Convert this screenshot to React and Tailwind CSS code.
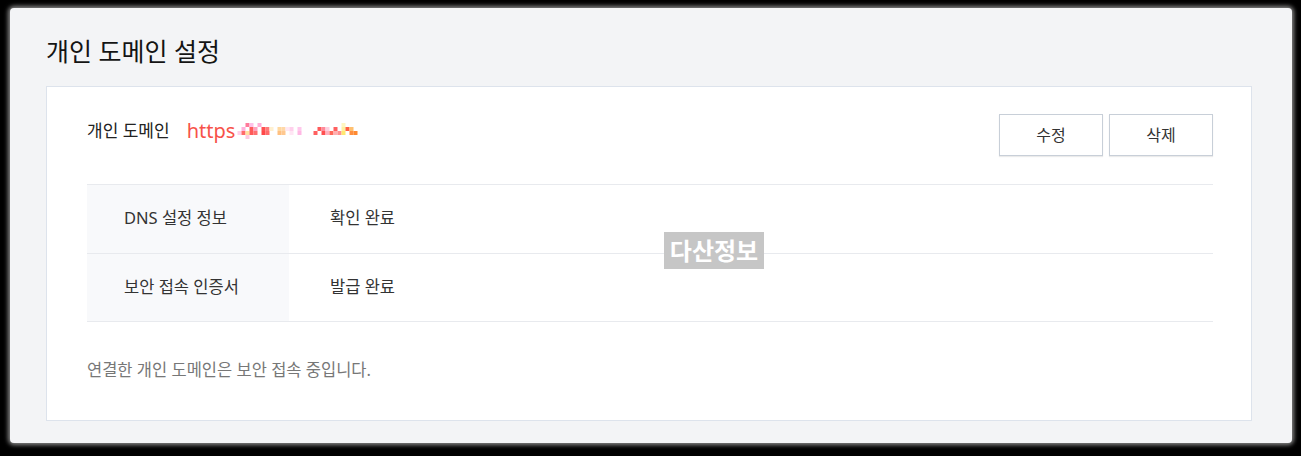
import React from "react";

// blurred-out domain (mosaic blocks), col/row in 4px cells
const mosaic = [
  [0, 2, "#ffd0ea"], [1, 1, "#ffb3dd"], [1, 2, "#ff6a6a"], [2, 0, "#ff7a9a"], [2, 2, "#ffe0a0"],
  [2, 3, "#ffc8e0"], [3, 1, "#ff5a5a"], [3, 2, "#ff5a5a"], [3, 0, "#ffc0e8"], [4, 1, "#ffa0c0"],
  [4, 2, "#ff7070"], [5, 0, "#ffb0d8"], [6, 1, "#ff5050"], [6, 2, "#ff4848"], [7, 1, "#ff7a7a"],
  [7, 2, "#ff6a6a"], [8, 1, "#fff0d0"], [10, 1, "#ffd8a0"], [10, 2, "#ffc080"], [11, 1, "#ffd8a8"],
  [11, 2, "#ffc890"], [12, 1, "#ffe8f4"], [13, 1, "#ffd0ec"], [13, 2, "#ffe6f4"], [15, 1, "#ffc8ec"],
  [15, 2, "#ffb8e4"], [19, 2, "#ff6060"], [20, 1, "#ff5a5a"], [21, 1, "#ff8a9a"], [21, 2, "#ff5050"],
  [22, 1, "#ffd0e0"], [22, 2, "#ffb0c0"], [23, 2, "#ff6a5a"], [24, 1, "#ff6060"], [24, 2, "#ffb0b0"],
  [25, 2, "#ff9090"], [26, 0, "#fff6c0"], [26, 1, "#fff0a0"], [26, 2, "#ffe870"], [27, 1, "#ff6040"],
  [28, 1, "#ffc070"], [28, 2, "#ff9040"], [29, 2, "#ff8a30"],
];

function Mosaic() {
  return (
    <svg width="125" height="16" viewBox="0 0 120 16" className="block">
      {mosaic.map(([c, r, fill], i) => (
        <rect key={i} x={c * 4} y={r * 4} width="4" height="4" fill={fill} />
      ))}
    </svg>
  );
}

const rows = [
  { label: "DNS 설정 정보", value: "확인 완료" },
  { label: "보안 접속 인증서", value: "발급 완료" },
];

export default function App() {
  return (
    <div
      className="h-[456px] w-full bg-black pt-[8px] pl-[10px] pr-[9px] pb-[13px]"
      style={{ fontFamily: '"Noto Sans", "Noto Sans CJK KR", sans-serif' }}
    >
      <div className="h-full rounded-sm bg-[#f3f4f6] shadow-[0_0_4px_2px_rgba(170,170,170,0.8)] pl-[36px] pr-[40px] pt-[27px]">
        <h1 className="text-[25px] leading-[32px] text-[#141414] font-normal">개인 도메인 설정</h1>

        <div className="relative mt-[19px] border border-[#dde3ec] bg-white pl-[40px] pr-[38px] pt-[27px] pb-[38px]">
          <div className="flex items-start justify-between">
            <div className="flex items-center pt-[5px]">
              <span className="text-[17px] leading-[24px] text-[#222]">개인 도메인</span>
              <span className="ml-[17px] text-[20px] leading-[24px] text-[#f7524a]">https</span>
              <Mosaic />
            </div>
            <div className="flex gap-[6px]">
              <button className="h-[42px] w-[104px] border border-[#c8cfd8] bg-white text-[16px] text-[#333] shadow-[0_1px_1px_rgba(0,0,0,0.08)]">
                수정
              </button>
              <button className="h-[42px] w-[104px] border border-[#c8cfd8] bg-white text-[16px] text-[#333] shadow-[0_1px_1px_rgba(0,0,0,0.08)]">
                삭제
              </button>
            </div>
          </div>

          <div className="mt-[28px] border-t border-[#e8eaee]">
            {rows.map((row) => (
              <div key={row.label} className="flex h-[68.5px] border-b border-[#e8eaee] text-[16.5px] text-[#333]">
                <div className="flex w-[202px] items-center bg-[#f8f9fb] pl-[37px]">{row.label}</div>
                <div className="flex items-center pl-[41px]">{row.value}</div>
              </div>
            ))}
          </div>

          <p className="mt-[36px] text-[16.5px] leading-[24px] text-[#777]">연결한 개인 도메인은 보안 접속 중입니다.</p>

          <div className="absolute left-[617px] top-[145px] flex h-[37px] w-[100px] items-center justify-center bg-[#c6c6c6] text-[24px] font-bold text-white">
            다산정보
          </div>
        </div>
      </div>
    </div>
  );
}
